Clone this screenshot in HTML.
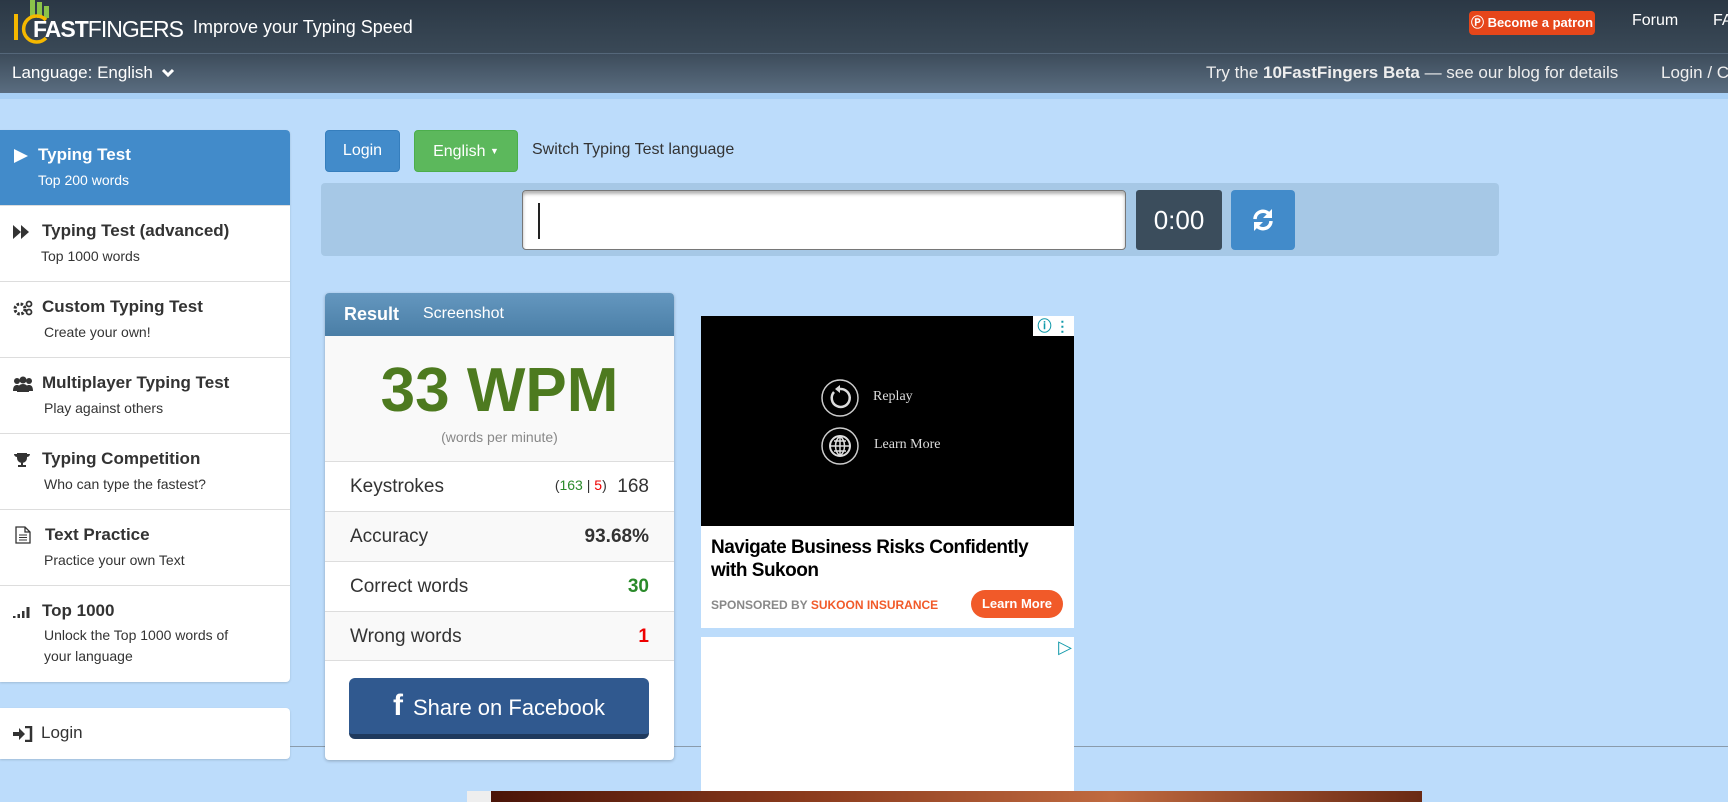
<!DOCTYPE html>
<html><head><meta charset="utf-8"><style>
*{margin:0;padding:0;box-sizing:border-box}
body{width:1728px;height:802px;overflow:hidden;background:#bcdcfb;font-family:"Liberation Sans",Arial,sans-serif;position:relative}
.abs{position:absolute;white-space:nowrap}
#top{left:0;top:0;width:1728px;height:53px;background:linear-gradient(#2b3845,#3a4957)}
#sub{left:0;top:53px;width:1728px;height:40px;background:linear-gradient(#3d4c5b,#5a6d80);border-top:1px solid #55677a}
#stripe{left:0;top:93px;width:1728px;height:6px;background:#a8d0f6}
.w{color:#fff}
.side{left:0;top:130px;width:290px;height:552px;background:#fff;border-radius:0 4px 4px 0;box-shadow:0 1px 2px rgba(0,0,0,.15)}
.item{position:absolute;left:0;width:290px;height:76px;border-bottom:1px solid #ddd;color:#333}
.item b{position:absolute;left:42px;top:15px;font-size:17px}
.item span{position:absolute;left:44px;top:42px;font-size:14px;color:#333}
.item svg{position:absolute;left:13px;top:16px}
.btn{border-radius:4px;color:#fff;font-size:16px;text-align:center}
.row{position:absolute;left:0;width:349px;height:50px;border-top:1px solid #ddd;font-size:19px;color:#333}
.row .l{position:absolute;left:25px;top:14px}
.row .r{position:absolute;right:25px;top:14px}
</style></head><body>
<div id="top" class="abs"></div>
<div id="sub" class="abs"></div>
<div id="stripe" class="abs"></div>
<!-- logo -->
<svg class="abs" style="left:10px;top:0" width="40" height="50" viewBox="0 0 40 50">
<rect x="20" y="0" width="5" height="18" fill="#8bc34a"/><rect x="27" y="2" width="5" height="16" fill="#8bc34a"/><rect x="34" y="6" width="5" height="12" fill="#8bc34a"/>
<rect x="4" y="14" width="4" height="26" fill="#f5b800"/>
<path d="M36 20 A13 13 0 1 0 36 38" stroke="#f5b800" stroke-width="3.5" fill="none"/>
</svg>
<div class="abs w" style="left:33px;top:16px;font-size:23px;letter-spacing:-1px"><b>FAST</b>FINGERS</div>
<div class="abs w" style="left:193px;top:17px;font-size:18px">Improve your Typing Speed</div>
<div class="abs btn" style="left:1469px;top:11px;width:126px;height:24px;background:#e6461a;font-size:13px;line-height:24px;font-weight:bold">&#x24C5; Become a patron</div>
<div class="abs w" style="left:1632px;top:12px;font-size:16px">Forum</div>
<div class="abs w" style="left:1713px;top:12px;font-size:16px">FA</div>
<div class="abs w" style="left:12px;top:63px;font-size:17px">Language: English
<svg width="14" height="10" viewBox="0 0 14 10" style="margin-left:3px"><path d="M2 2l5 5 5-5" stroke="#fff" stroke-width="3" fill="none"/></svg></div>
<div class="abs w" style="left:1206px;top:63px;font-size:17px;color:#eee">Try the <b>10FastFingers Beta</b> — see our blog for details</div>
<div class="abs w" style="left:1661px;top:63px;font-size:17px;color:#eee">Login / C</div>

<!-- sidebar -->
<div class="abs side">
 <div class="item" style="top:0;background:#428bca;border-radius:0 4px 0 0;color:#fff"><svg width="16" height="16" viewBox="0 0 16 16" style="top:18px"><path d="M1 1L15 8L1 15Z" fill="#fff"/></svg><b style="left:38px;color:#fff">Typing Test</b><span style="left:38px;color:#fff">Top 200 words</span></div>
 <div class="item" style="top:76px"><svg width="16" height="14" viewBox="0 0 16 14" style="top:19px"><path d="M0 0L8 7L0 14ZM8 0L16 7L8 14Z" fill="#333"/></svg><b>Typing Test (advanced)</b><span style="left:41px">Top 1000 words</span></div>
 <div class="item" style="top:152px"><svg width="20" height="16" viewBox="0 0 20 16" style="top:18px"><circle cx="7" cy="9" r="5" fill="none" stroke="#333" stroke-width="3" stroke-dasharray="2.5 1.5"/><circle cx="16" cy="4" r="2.5" fill="none" stroke="#333" stroke-width="1.8"/><circle cx="16" cy="12" r="2.5" fill="none" stroke="#333" stroke-width="1.8"/></svg><b>Custom Typing Test</b><span>Create your own!</span></div>
 <div class="item" style="top:228px"><svg width="20" height="16" viewBox="0 0 20 16" style="top:18px"><circle cx="4" cy="5" r="3" fill="#333"/><circle cx="16" cy="5" r="3" fill="#333"/><circle cx="10" cy="4" r="3.5" fill="#333"/><path d="M0 15c0-5 2-6 4-6s4 1 4 6ZM12 15c0-5 2-6 4-6s4 1 4 6ZM4 16c0-6 3-8 6-8s6 2 6 8Z" fill="#333"/></svg><b>Multiplayer Typing Test</b><span>Play against others</span></div>
 <div class="item" style="top:304px"><svg width="18" height="16" viewBox="0 0 18 16" style="top:18px"><path d="M4 1h10v5a5 5 0 0 1-10 0Z M1 2h3v3a3 3 0 0 1-3-3ZM17 2h-3v3a3 3 0 0 0 3-3Z M8 10h2v3h3v2H5v-2h3Z" fill="#333"/></svg><b>Typing Competition</b><span>Who can type the fastest?</span></div>
 <div class="item" style="top:380px"><svg width="16" height="18" viewBox="0 0 16 18" style="top:16px;left:15px"><path d="M1 1h9l5 5v11H1Z M10 1v5h5" fill="none" stroke="#333" stroke-width="1.3"/><path d="M4 9h8M4 11.5h8M4 14h8" stroke="#333"/></svg><b style="left:45px">Text Practice</b><span>Practice your own Text</span></div>
 <div class="item" style="top:456px;height:96px;border:none"><svg width="20" height="16" viewBox="0 0 20 16" style="top:17px"><rect x="0" y="13" width="2.5" height="2" fill="#333"/><rect x="4.5" y="11" width="2.5" height="4" fill="#333"/><rect x="9" y="8" width="2.5" height="7" fill="#333"/><rect x="13.5" y="4" width="3" height="11" fill="#333"/></svg><b>Top 1000</b><span style="line-height:21px;top:39px">Unlock the Top 1000 words of<br>your language</span></div>
</div>
<div class="abs" style="left:0;top:708px;width:290px;height:51px;background:#fff;border-radius:0 4px 4px 0;box-shadow:0 1px 2px rgba(0,0,0,.15)"><svg class="abs" style="left:13px;top:18px" width="20" height="16" viewBox="0 0 20 16"><path d="M0 6h6V2l6 6-6 6v-4H0Z" fill="#333"/><path d="M12 1h6v14h-6" fill="none" stroke="#333" stroke-width="2.5"/></svg><span class="abs" style="left:41px;top:15px;font-size:17px;color:#333">Login</span></div>
<div class="abs" style="left:290px;top:746px;width:1438px;height:1px;background:#8a9bab"></div>

<!-- buttons -->
<div class="abs btn" style="left:325px;top:130px;width:75px;height:42px;background:#428bca;line-height:40px;border:1px solid #357ebd">Login</div>
<div class="abs btn" style="left:414px;top:130px;width:104px;height:42px;background:#5cb85c;line-height:40px;border:1px solid #4cae4c">English <span style="font-size:9px;vertical-align:2px">&#9660;</span></div>
<div class="abs" style="left:532px;top:141px;font-size:16px;color:#333">Switch Typing Test language</div>
<div class="abs" style="left:321px;top:183px;width:1178px;height:73px;background:#a6c8e6;border-radius:4px"></div>
<div class="abs" style="left:522px;top:190px;width:604px;height:60px;background:#fff;border:1px solid #777;border-radius:4px;box-shadow:inset 0 3px 3px rgba(0,0,0,.3)"><div class="abs" style="left:15px;top:12px;width:2px;height:36px;background:#222"></div></div>
<div class="abs" style="left:1136px;top:190px;width:86px;height:60px;background:#3b4d5c;border-radius:3px;color:#fff;font-size:26px;text-align:center;line-height:60px">0:00</div>
<div class="abs" style="left:1231px;top:190px;width:64px;height:60px;background:#428bca;border-radius:4px"><svg class="abs" style="left:20px;top:17px" width="24" height="26" viewBox="0 0 24 26"><path d="M4 12A8 8 0 0 1 18 7" stroke="#fff" stroke-width="3.5" fill="none"/><path d="M21 2v9h-9Z" fill="#fff"/><path d="M20 14A8 8 0 0 1 6 19" stroke="#fff" stroke-width="3.5" fill="none"/><path d="M3 24v-9h9Z" fill="#fff"/></svg></div>

<!-- result -->
<div class="abs" style="left:325px;top:293px;width:349px;height:467px;background:#fff;border-radius:4px;box-shadow:0 1px 3px rgba(0,0,0,.25);overflow:hidden">
 <div class="abs" style="left:0;top:0;width:349px;height:43px;background:linear-gradient(#6497bf,#4a7ea6)"><b class="abs w" style="left:19px;top:11px;font-size:18px">Result</b><span class="abs w" style="left:98px;top:12px;font-size:16px">Screenshot</span></div>
 <div class="abs" style="left:0;top:43px;width:349px;height:125px;background:#f9f9f9"></div>
 <div class="abs" style="left:0;top:62px;width:349px;text-align:center;font-size:62px;font-weight:bold;color:#4d7a1f">33 WPM</div>
 <div class="abs" style="left:0;top:136px;width:349px;text-align:center;font-size:14px;color:#888">(words per minute)</div>
 <div class="row" style="top:168px;background:#fff"><span class="l">Keystrokes</span><span class="r"><span style="font-size:14px;position:relative;top:-2px">(<span style="color:#2a8a2a">163</span> | <span style="color:#e00">5</span>)</span>&nbsp;&nbsp;168</span></div>
 <div class="row" style="top:218px;background:#f9f9f9"><span class="l">Accuracy</span><b class="r">93.68%</b></div>
 <div class="row" style="top:268px;background:#fff"><span class="l">Correct words</span><b class="r" style="color:#2a8a2a">30</b></div>
 <div class="row" style="top:318px;background:#f9f9f9;border-bottom:1px solid #ddd"><span class="l">Wrong words</span><b class="r" style="color:#e00">1</b></div>
 <div class="abs btn" style="left:24px;top:385px;width:300px;height:61px;background:#30598f;border-bottom:5px solid #1f3a5e;border-radius:6px;font-size:22px;line-height:56px"><b style="font-size:30px;margin-right:10px">f</b>Share on Facebook</div>
</div>

<!-- ad -->
<div class="abs" style="left:701px;top:316px;width:373px;height:312px;background:#fff">
 <div class="abs" style="left:0;top:0;width:373px;height:210px;background:#000"></div>
 <div class="abs" style="left:332px;top:0;width:41px;height:20px;background:#fff;color:#19a;font-size:14px;font-weight:bold;text-align:center">&#9432; &#8942;</div>
 <svg class="abs" style="left:120px;top:63px" width="38" height="86" viewBox="0 0 38 86"><circle cx="19" cy="19" r="18" fill="none" stroke="#ccc" stroke-width="1.5"/><path d="M13 13A9 9 0 1 0 19 10" stroke="#ddd" stroke-width="2.5" fill="none"/><path d="M19 6v8l-5-4Z" fill="#ddd"/><circle cx="19" cy="67" r="18" fill="none" stroke="#ccc" stroke-width="1.5"/><circle cx="19" cy="67" r="10" fill="none" stroke="#ddd" stroke-width="2"/><path d="M9 67h20M19 57v20M13 62h12M13 72h12M19 57c-6 5-6 15 0 20M19 57c6 5 6 15 0 20" stroke="#ddd" stroke-width="1.5" fill="none"/></svg>
 <div class="abs" style="left:172px;top:73px;color:#ddd;font-family:'Liberation Serif',serif;font-size:14px">Replay</div>
 <div class="abs" style="left:173px;top:121px;color:#ddd;font-family:'Liberation Serif',serif;font-size:14px">Learn More</div>
 <div class="abs" style="left:10px;top:220px;font-size:19px;font-weight:bold;color:#000;line-height:23px;letter-spacing:-.5px">Navigate Business Risks Confidently<br>with Sukoon</div>
 <div class="abs" style="left:10px;top:282px;font-size:12px;color:#888;font-weight:bold">SPONSORED BY <span style="color:#f15a29">SUKOON INSURANCE</span></div>
 <div class="abs btn" style="left:270px;top:274px;width:92px;height:28px;background:#f15a29;border-radius:14px;font-size:13px;line-height:28px;font-weight:bold">Learn More</div>
</div>
<div class="abs" style="left:701px;top:637px;width:373px;height:165px;background:#fff"><span class="abs" style="right:2px;top:0;color:#19a;font-size:18px">&#x25B7;</span></div>
<div class="abs" style="left:467px;top:791px;width:955px;height:11px;background:#eee"><div class="abs" style="left:24px;top:0;width:931px;height:11px;background:linear-gradient(90deg,#4a1408,#8a3a1c,#c06a40,#6a2a14)"></div></div>
</body></html>
